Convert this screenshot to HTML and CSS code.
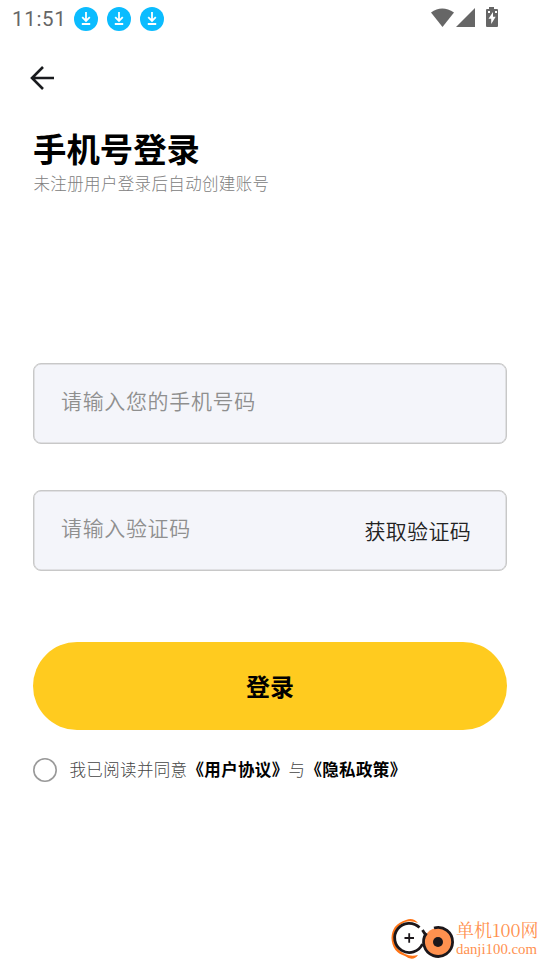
FILE: index.html
```html
<!DOCTYPE html>
<html lang="zh-CN">
<head>
<meta charset="utf-8">
<title>手机号登录</title>
<link rel="stylesheet" href="styles.css">
</head>
<body>
<header class="status">
  <span class="time">11:51</span>
  <div class="notices">
    <svg class="notice" viewBox="0 0 24 24"><circle cx="12" cy="12" r="12"/><path d="M12 5v9M8.2 10.2 12 14l3.8-3.8M7.8 17h8.4"/></svg>
    <svg class="notice" viewBox="0 0 24 24"><circle cx="12" cy="12" r="12"/><path d="M12 5v9M8.2 10.2 12 14l3.8-3.8M7.8 17h8.4"/></svg>
    <svg class="notice" viewBox="0 0 24 24"><circle cx="12" cy="12" r="12"/><path d="M12 5v9M8.2 10.2 12 14l3.8-3.8M7.8 17h8.4"/></svg>
  </div>
  <svg class="system" viewBox="0 0 70 24">
    <path d="M1 5.5Q12 -2.5 24 5.5L12.5 20z"/>
    <path d="M45 1v19H26z"/>
    <path fill-rule="evenodd" d="M59 0h5v2h3q1 0 1 1v16q0 1-1 1H57q-1 0-1-1V3q0-1 1-1h2zM63 5l-4.500 6.800h2.700V17l4.500-7.200H63z"/>
    <path class="gap" d="M58 4h2v2h-2zM65 4h2v2h-2z"/>
  </svg>
</header>
<nav class="nav">
  <svg class="back" viewBox="0 0 26 26"><path d="M24 13H2.500M13 2 2 13l11 11"/></svg>
</nav>
<main class="login">
  <h1 class="title">手机号登录</h1>
  <p class="subtitle">未注册用户登录后自动创建账号</p>
  <div class="fields">
    <div class="field"><span class="hint">请输入您的手机号码</span></div>
    <div class="field"><span class="hint">请输入验证码</span><span class="code">获取验证码</span></div>
  </div>
  <div class="submit">登录</div>
  <div class="agree"><svg class="radio" viewBox="0 0 24 24"><circle cx="12" cy="12" r="11.200"/></svg><span class="terms">我已阅读并同意<b>《用户协议》</b>与<b>《隐私政策》</b></span></div>
</main>
<footer class="brand">
  <svg class="logo" viewBox="0 0 64 42">
    <path class="swoosh" d="M27 5Q22-1 15 2Q1 6 .5 20Q1 34 14 38Q22 44 27 37Q20 39 14 36Q3 31 3 20Q3 9 14 4Q20 2 27 5z"/>
    <path class="ring" d="M28.500 9.500A14.600 14.600 0 1 0 31.500 26"/>
    <path class="ring" d="M31.500 12L35.500 18.500"/>
    <circle class="disc" cx="47" cy="24" r="14"/>
    <path class="ring" d="M43 10A14.500 14.500 0 1 1 35.500 15.200"/>
    <circle class="hub" cx="47" cy="24" r="5"/>
    <path class="plus" d="M13.500 20h9.500M18.200 15.300v9.500"/>
  </svg>
  <div class="words"><span class="name">单机100网</span><span class="domain">danji100.com</span></div>
</footer>
</body>
</html>
```
FILE: styles.css
```css
* { box-sizing: border-box; }
body {
  margin: 0;
  width: 540px;
  height: 960px;
  overflow: hidden;
  background: #fff;
  display: flex;
  flex-direction: column;
  font-family: "Noto Sans CJK SC", sans-serif;
}
.status {
  height: 38px;
  flex: none;
  padding: 7px 40px 0 12px;
  display: flex;
  align-items: flex-start;
}
.time {
  width: 62px;
  font: 400 20.500px/24px Roboto, sans-serif;
  letter-spacing: .7px;
  color: #666;
}
.notices { display: flex; gap: 9px; flex: 1; }
.notice { width: 24px; height: 24px; fill: #0bbcff; }
.notice path { fill: none; stroke: #fff; stroke-width: 1.8; }
.system { width: 70px; height: 24px; fill: #666; }
.gap { fill: #fff; }
.nav { height: 80px; flex: none; padding: 27px 30px; }
.back { display: block; width: 26px; height: 26px; fill: none; stroke: #191b1e; stroke-width: 2.6; }
.login { padding: 9px 33px 0; flex: 1; }
.title { margin: 0; font-size: 33.400px; line-height: 42px; font-weight: 700; color: #000; }
.subtitle { margin: 0; padding-left: .5px; font-size: 16.500px; line-height: 28px; letter-spacing: .35px; font-weight: 300; color: #808080; }
.fields { margin-top: 166px; display: grid; gap: 46px; }
.field {
  height: 81px;
  border: 1px solid #c8c8c8;
  box-shadow: inset 0 0 0 .5px #ccc;
  border-radius: 8px;
  background: #f4f5fa;
  padding: 0 35px 0 27px;
  display: flex;
  justify-content: space-between;
}
.hint { font-size: 21px; line-height: 72px; letter-spacing: .65px; font-weight: 350; color: #8f8f8f; }
.code { font-size: 21px; line-height: 79px; letter-spacing: .3px; font-weight: 350; color: #222; }
.submit {
  height: 88px;
  margin-top: 71px;
  border-radius: 44px;
  background: #ffcb1f;
  color: #000;
  font-size: 24px;
  font-weight: 700;
  line-height: 88px;
  text-align: center;
}
.agree { margin-top: 27px; height: 25px; display: flex; align-items: center; gap: 12px; }
.radio { width: 24px; height: 24px; flex: none; fill: none; stroke: #999; stroke-width: 1.6; }
.terms { padding: 0 0 1px .5px; font-size: 16.500px; line-height: 24px; letter-spacing: .35px; font-weight: 300; color: #444; white-space: nowrap; }
.terms b { font-weight: 700; color: #000; }
.brand { height: 42px; flex: none; padding-left: 391px; display: flex; gap: 1px; }
.logo { width: 64px; height: 42px; flex: none; }
.swoosh { fill: #ff7416; }
.ring { fill: none; stroke: #1c171b; stroke-width: 2.8; }
.disc { fill: #ff914f; }
.hub { fill: #1c171b; }
.plus { fill: none; stroke: #1c171b; stroke-width: 1.8; }
.words { display: flex; flex-direction: column; color: #ff914f; white-space: nowrap; }
.name { font: 400 18px/23px "Noto Serif CJK SC", "Noto Sans CJK SC", sans-serif; }
.domain { font: 14.800px/16px "Liberation Serif", serif; }
```
